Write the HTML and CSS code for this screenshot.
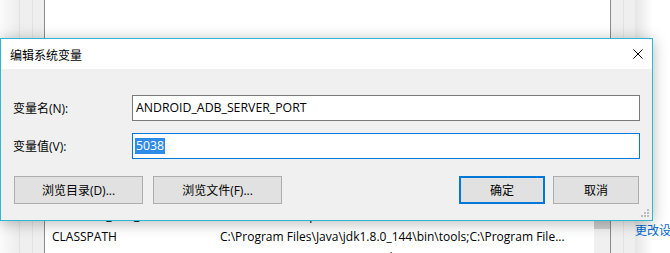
FILE: index.html
```html
<!DOCTYPE html>
<html lang="zh-CN">
<head>
  <meta charset="UTF-8">
  <title>编辑系统变量</title>
  <link rel="stylesheet" href="styles.css">
</head>
<body>
  <div class="screen">
    <!-- ventana de variables de entorno detrás del diálogo -->
    <div class="backdrop">
      <div class="edge"></div>
      <div class="gutter"></div>
      <div class="gutter"></div>
      <div class="listview">
        <div class="rows">
          <div class="row"><span class="name">ANDROID_SDK_HOME</span><span class="value">D:\Android\sdk\platform-tools</span></div>
          <div class="row"><span class="name">CLASSPATH</span><span class="value">C:\Program Files\Java\jdk1.8.0_144\bin\tools;C:\Program File...</span></div>
          <div class="row"><span class="name">ComSpec</span><span class="value">%SystemRoot%\system32\cmd.exe</span></div>
        </div>
        <div class="scrollbar"><div class="thumb"></div></div>
      </div>
      <div class="gutter plain"></div>
      <div class="gutter"></div>
      <div class="desktop"><span class="link">更改设置</span></div>
    </div>

    <div class="dialog">
      <div class="titlebar">
        <span class="title">编辑系统变量</span>
        <svg class="close" width="10" height="10" viewBox="0 0 10 10">
          <path d="M0.5 0.5 L9.5 9.5 M9.5 0.5 L0.5 9.5" stroke="#000" stroke-width="1" fill="none"/>
        </svg>
      </div>
      <div class="dialog-body">
        <div class="field">
          <span class="label">变量名(N):</span>
          <div class="textbox">ANDROID_ADB_SERVER_PORT</div>
        </div>
        <div class="field">
          <span class="label">变量值(V):</span>
          <div class="textbox focused"><span class="selected">5038</span></div>
        </div>
        <div class="actions">
          <button class="btn wide">浏览目录(D)...</button>
          <button class="btn wide">浏览文件(F)...</button>
          <span class="spacer"></span>
          <button class="btn default">确定</button>
          <button class="btn">取消</button>
        </div>
      </div>
      <svg class="grip" width="8" height="8" viewBox="0 0 8 8">
        <rect x="6" y="0" width="2" height="2"/>
        <rect x="3" y="3" width="2" height="2"/>
        <rect x="6" y="3" width="2" height="2"/>
        <rect x="0" y="6" width="2" height="2"/>
        <rect x="3" y="6" width="2" height="2"/>
        <rect x="6" y="6" width="2" height="2"/>
      </svg>
    </div>
  </div>
</body>
</html>
```

FILE: styles.css
```css
:root {
  --ui-font: "Open Sans", "Noto Sans CJK SC", sans-serif;
  --cjk-font: "Noto Sans CJK SC", "Open Sans", sans-serif;
  --face: #f0f0f0;
  --accent: #0078d7;
  --frame: #2fb6d3;
}
body {
  margin: 0;
  background: #fff;
  color: #000;
  font-family: var(--ui-font);
}
.screen {
  position: relative;
  width: 670px;
  height: 253px;
  overflow: hidden;
}

/* fondo */
.backdrop {
  display: flex;
  height: 100%;
}
.backdrop > div {
  flex-shrink: 0;
}
.edge {
  width: 19px;
  background: linear-gradient(to right, #fbfbfb, #ededed);
}
.gutter {
  width: 11px;
  background: #efefef;
  border-left: 1px solid #e2e2e2;
}
.gutter:nth-child(2) {
  width: 12px;
}
.gutter.plain {
  width: 12px;
  border-left: none;
}
.listview {
  width: 565px;
  display: flex;
  background: #fff;
  border-left: 1px solid #8a8a8a;
  border-right: 1px solid #8a8a8a;
}
.rows {
  flex: 1;
  padding: 205px 0 0 7px;
  font-size: 12px;
}
.row {
  display: flex;
  height: 21px;
  line-height: 21px;
  white-space: nowrap;
}
.row .name {
  width: 168px;
}
.scrollbar {
  width: 16px;
  margin-top: 195px;
  background: var(--face);
}
.thumb {
  height: 34px;
  background: #cdcdcd;
}
.backdrop > .desktop {
  flex: 1 1 0;
  min-width: 0;
  overflow: hidden;
  padding-top: 218px;
  background: linear-gradient(to right, #e6e6e6, #fff 18px);
  white-space: nowrap;
}
.link {
  font-family: var(--cjk-font);
  font-size: 12px;
  line-height: 16px;
  color: #0066cc;
}

/* diálogo */
.dialog {
  position: absolute;
  left: 0;
  top: 38px;
  width: 651px;
  height: 181px;
  border: 1px solid var(--frame);
  background: var(--face);
  box-shadow: 0 2px 14px rgba(0, 0, 0, 0.28);
}
.titlebar {
  height: 30px;
  background: #fff;
  display: flex;
  align-items: center;
  justify-content: space-between;
  padding: 0 9px;
}
.title {
  font-family: var(--cjk-font);
  font-size: 12px;
}
.close {
  display: block;
  margin-top: -1px;
}
.dialog-body {
  padding: 26px 12px 16px 12px;
  font-size: 12px;
}
.field {
  display: flex;
  align-items: center;
  height: 26px;
}
.field + .field {
  margin-top: 12px;
}
.label {
  width: 119px;
}
.textbox {
  box-sizing: border-box;
  width: 508px;
  height: 26px;
  padding: 0 3px;
  border: 1px solid #7a7a7a;
  background: #fff;
  font-size: 12.3px;
  line-height: 24px;
}
.textbox.focused {
  border-color: var(--accent);
  padding-left: 2px;
}
.selected {
  display: inline-block;
  line-height: 16px;
  padding: 0 1px;
  margin-top: 4px;
  vertical-align: top;
  background: #2e8be6;
  color: #fff;
}
.actions {
  display: flex;
  margin-top: 17px;
  padding: 0 1px;
  gap: 10px;
}
.spacer {
  flex: 1;
}
.btn {
  box-sizing: border-box;
  width: 86px;
  height: 28px;
  padding: 0;
  border: 1px solid #adadad;
  background: #e1e1e1;
  color: #000;
  font-family: var(--ui-font);
  font-size: 12px;
}
.btn.wide {
  width: 129px;
}
.btn.default {
  border: 2px solid var(--accent);
  margin-right: -2px;
}
.grip {
  position: absolute;
  right: 3px;
  bottom: 3px;
  fill: #bdbdbd;
}
```
